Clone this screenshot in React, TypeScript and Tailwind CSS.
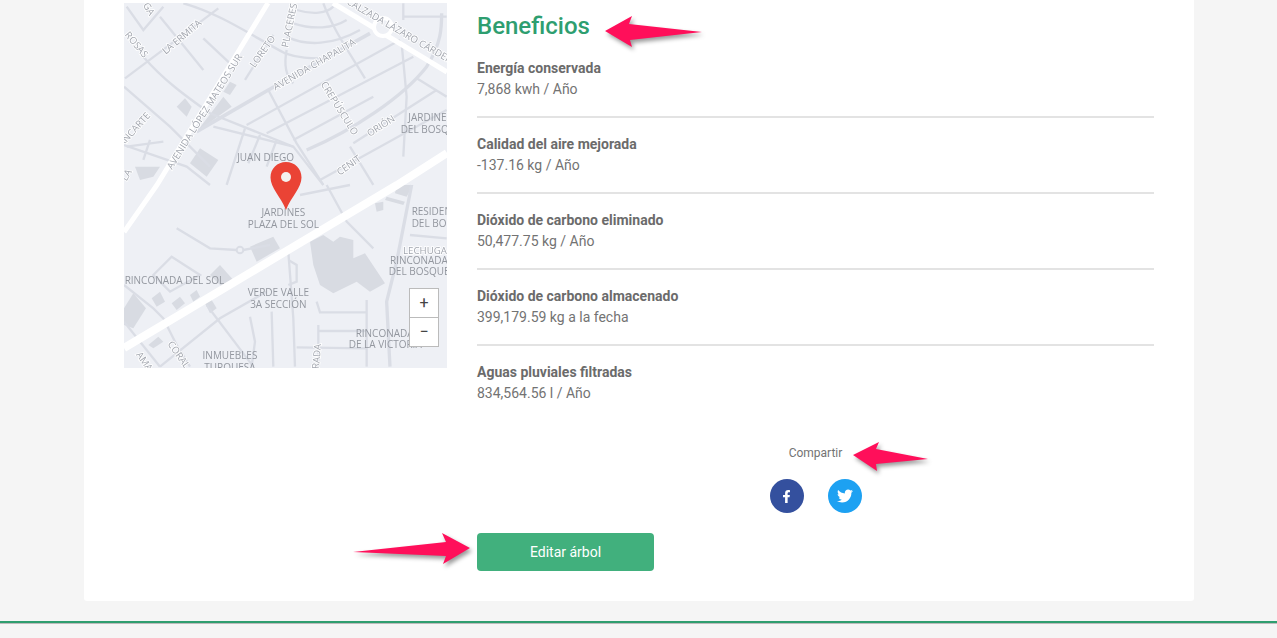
import { FaFacebookF, FaTwitter } from "react-icons/fa";

const benefits = [
  { label: "Energía conservada", value: "7,868 kwh / Año" },
  { label: "Calidad del aire mejorada", value: "-137.16 kg / Año" },
  { label: "Dióxido de carbono eliminado", value: "50,477.75 kg / Año" },
  { label: "Dióxido de carbono almacenado", value: "399,179.59 kg a la fecha" },
  { label: "Aguas pluviales filtradas", value: "834,564.56 l / Año" },
];

// map data is in 3x units, scaled down by the <g> transforms below
const topRoads = [
  "M20 20L70 90L130 20",
  "M15 235L295 25",
  "M120 50L250 210",
  "M190 10C300 40 400 110 495 160C540 175 570 175 600 175",
  "M250 115L330 190",
  "M70 170C130 240 200 290 270 340L520 440L610 555",
  "M12 260L150 380L270 500",
  "M445 270L530 430L610 555",
  "M375 240L460 105",
  "M500 150C490 200 500 230 520 250",
  "M610 10C640 90 690 160 735 235",
  "M380 375L840 120",
  "M440 400L880 170",
  "M520 420L760 290",
  "M700 430L950 270",
  "M845 130L860 290L850 470",
  "M890 235L980 290",
  "M600 540L980 330",
  "M320 555L375 385",
  "M385 490L420 405",
  "M440 500L470 420",
  "M20 440L130 425",
  "M90 420L70 480",
  "M12 435L200 500L270 555",
  "M850 50L980 50",
  "M850 10L850 60",
  "M530 30C580 45 620 40 640 20",
  "M520 70C580 90 640 85 680 60",
  "M500 110C560 140 640 135 720 90",
  "M690 440L760 555",
  "M280 380L520 440",
];
const topBuildings = [
  "170,320 195,295 215,320 200,350",
  "310,275 330,245 350,255 330,285",
  "280,330 310,290 335,320 230,395",
  "210,490 240,445 295,480 260,530",
  "45,500 120,500 100,530 60,540",
];
const bottomRoads = [
  "M170 130L270 190L350 195",
  "M370 195L450 180",
  "M100 270L155 215L240 270L150 320Z",
  "M12 300L100 370L130 400L170 480L210 545",
  "M620 0L680 110L760 190",
  "M540 30L690 0",
  "M870 150L980 160",
  "M505 200L520 400L525 545",
  "M505 225L530 240L530 290L505 300",
  "M590 350L600 382L740 382",
  "M740 345L740 545",
  "M595 420L595 545",
  "M595 438L740 438",
  "M530 487L740 490",
  "M120 545L300 400L440 320",
  "M260 360L400 545",
  "M390 395L405 470L395 545",
  "M455 380L460 545",
  "M12 410L120 545",
];
const bottomBuildings = [
  "570,170 610,150 640,170 660,155 700,165 700,220 735,205 795,295 750,320 710,290 640,325 600,300 580,240",
  "390,185 460,155 480,190 410,230",
  "800,35 855,50 850,60 795,45",
  "830,0 880,0 860,35 825,25",
  "765,55 790,50 790,75 770,80",
  "155,355 180,335 195,355 170,375",
  "210,330 230,315 240,335 220,350",
  "255,355 275,345 290,370 270,385",
  "12,370 40,325 78,370 40,430 12,420",
  "95,340 120,320 135,350 110,365",
  "270,270 300,240 340,285 310,310",
  "85,480 115,455 130,470 100,490",
];

const topLabels = [
  { t: "LA ERMITA", x: 192, y: 118, r: -40 },
  { t: "ROSAS", x: 42, y: 140, r: 50 },
  { t: "GA", x: 78, y: 32, r: 60 },
  { t: "AVENIDA LÓPEZ MATEOS SUR", x: 262, y: 340, r: -58 },
  { t: "LORETO", x: 436, y: 160, r: -55 },
  { t: "PLACERES", x: 518, y: 78, r: -78 },
  { t: "AVENIDA CHAPALITA", x: 588, y: 202, r: -30 },
  { t: "CALZADA LÁZARO CÁRDENAS", x: 850, y: 110, r: 30 },
  { t: "CREPÚSCULO", x: 650, y: 330, r: 58 },
  { t: "ORIÓN", x: 788, y: 386, r: -33 },
  { t: "CENIT", x: 692, y: 504, r: -35 },
  { t: "ANCARTE", x: 50, y: 395, r: -48 },
  { t: "LA", x: 28, y: 530, r: -60 },
];
const bottomLabels = [
  { t: "AMA", x: 65, y: 535, r: 55 },
  { t: "CORAL", x: 168, y: 515, r: 55 },
  { t: "RADA", x: 600, y: 515, r: -85 },
  { t: "LECHUGA", x: 915, y: 206, r: 0 },
];

function MapText({ t, x, y, r }: { t: string; x: number; y: number; r: number }) {
  return (
    <text
      x={x}
      y={y}
      transform={`rotate(${r} ${x} ${y})`}
      textAnchor="middle"
      fontSize="29"
      className="fill-[#a2a6af] stroke-white stroke-[5px] [paint-order:stroke]"
    >
      {t}
    </text>
  );
}

function PlaceText({ t, x, y, anchor = "middle" }: { t: string; x: number; y: number; anchor?: "middle" | "start" }) {
  return (
    <text x={x} y={y} textAnchor={anchor} fontSize="30" className="fill-[#93979f]">
      {t}
    </text>
  );
}

function TreeMap() {
  return (
    <div className="relative w-[323px] h-[365px] shrink-0 overflow-hidden bg-[#eef0f5]">
      <svg width="323" height="365" viewBox="0 0 323 365" className="block font-['Open_Sans',sans-serif] blur-[0.3px]">
        <g transform="translate(-4 -3) scale(0.3333)">
          {topBuildings.map((p) => (
            <polygon key={p} points={p} fill="#d8dbe2" />
          ))}
          {topRoads.map((d) => (
            <path key={d} d={d} fill="none" stroke="#dadde5" strokeWidth="7" />
          ))}
          <path d="M230 395L445 270L750 100" fill="none" stroke="#dadde5" strokeWidth="11" />
          <path d="M560 450C700 390 850 290 920 200C965 130 965 80 965 40" fill="none" stroke="#dadde5" strokeWidth="10" />
        </g>
        <g transform="translate(-4 182) scale(0.3333)">
          {bottomBuildings.map((p) => (
            <polygon key={p} points={p} fill="#d8dbe2" />
          ))}
          {bottomRoads.map((d) => (
            <path key={d} d={d} fill="none" stroke="#dadde5" strokeWidth="7" />
          ))}
          <path d="M875 0L830 230L800 350L810 545" fill="none" stroke="#dadde5" strokeWidth="10" />
          <circle cx="360" cy="195" r="10" fill="#eef0f5" stroke="#dadde5" strokeWidth="6" />
        </g>
        {/* main avenues */}
        <path d="M144 0L33 182L0 229" fill="none" stroke="#fff" strokeWidth="5" />
        <path d="M209 0L323 69" fill="none" stroke="#fff" strokeWidth="5" />
        <circle cx="259" cy="24" r="9" fill="#eef0f5" stroke="#fff" strokeWidth="4" />
        <path d="M0 345L273 182L323 150" fill="none" stroke="#fff" strokeWidth="8" />
        <g transform="translate(-4 -3) scale(0.3333)">
          {topLabels.map((l) => (
            <MapText key={l.t} {...l} />
          ))}
          <PlaceText t="JUAN DIEGO" x={437} y={482} />
          <PlaceText t="JARDINES" x={865} y={362} anchor="start" />
          <PlaceText t="DEL BOSQUE" x={842} y={398} anchor="start" />
        </g>
        <g transform="translate(-4 182) scale(0.3333)">
          {bottomLabels.map((l) => (
            <MapText key={l.t} {...l} />
          ))}
          <PlaceText t="JARDINES" x={490} y={92} />
          <PlaceText t="PLAZA DEL SOL" x={490} y={128} />
          <PlaceText t="RESIDENCIAL" x={875} y={90} anchor="start" />
          <PlaceText t="DEL BOSQUE" x={875} y={126} anchor="start" />
          <PlaceText t="RINCONADA" x={810} y={236} anchor="start" />
          <PlaceText t="DEL BOSQUE" x={806} y={270} anchor="start" />
          <PlaceText t="RINCONADA DEL SOL" x={14} y={296} anchor="start" />
          <PlaceText t="VERDE VALLE" x={475} y={332} />
          <PlaceText t="3A SECCIÓN" x={475} y={368} />
          <PlaceText t="RINCONADA" x={707} y={455} anchor="start" />
          <PlaceText t="DE LA VICTORIA" x={686} y={490} anchor="start" />
          <PlaceText t="INMUEBLES" x={330} y={523} />
          <PlaceText t="TURQUESA" x={330} y={557} />
        </g>
      </svg>
      {/* marker */}
      <svg width="32" height="50" viewBox="0 0 32 50" className="absolute left-[146px] top-[158px]">
        <path d="M16 1C7.2 1 .5 7.8.5 16.4C.5 27 10.5 35 16 49C21.5 35 31.500 27 31.500 16.400C31.500 7.800 24.800 1 16 1Z" fill="#ea4335" />
        <circle cx="16" cy="16" r="5" fill="#f4f1ef" />
      </svg>
      {/* zoom control */}
      <div className="absolute left-[285px] top-[285px] w-[30px] flex flex-col bg-white border border-[#bbb] font-['Roboto',sans-serif] text-[#444]">
        <div className="h-[29px] flex items-center justify-center text-base leading-none border-b border-[#bbb]">+</div>
        <div className="h-[28px] flex items-center justify-center text-base leading-none">−</div>
      </div>
    </div>
  );
}

export default function App() {
  return (
    <div className="relative h-[638px] overflow-hidden bg-[#f5f5f5] font-['Roboto',sans-serif]">
      <div className="mx-[84px] h-[601px] w-[1110px] bg-white rounded-b-[3px] flex pl-[40px] pt-[3px]">
        <TreeMap />
        <div className="ml-[30px] w-[677px]">
          <h2 className="pt-[7px] text-2xl leading-8 font-medium text-[#2e9e70]">Beneficios</h2>
          {benefits.map((b, i) => (
            <div
              key={b.label}
              className={`pt-4 text-sm leading-[21px] text-[#737373] ${i < benefits.length - 1 ? "h-[76px] border-b-2 border-[#e3e3e3]" : ""}`}
            >
              <div className="font-bold text-[#6b6b6b]">{b.label}</div>
              <div>{b.value}</div>
            </div>
          ))}
          <div className="mt-10 text-center text-xs leading-[18px] text-[#737373]">Compartir</div>
          <div className="mt-[17px] flex justify-center gap-6">
            <a className="w-[34px] h-[34px] rounded-full bg-[#34509e] flex items-center justify-center text-white">
              <FaFacebookF size={13} />
            </a>
            <a className="w-[34px] h-[34px] rounded-full bg-[#1da1f2] flex items-center justify-center text-white">
              <FaTwitter size={16} />
            </a>
          </div>
          <button
            type="button"
            className="mt-5 w-[177px] h-[38px] rounded bg-[#41b07d] text-sm text-white flex items-center justify-center"
          >
            Editar árbol
          </button>
        </div>
      </div>
      <div className="mt-5 h-[3px] bg-[#2f9e6f] border-b border-[#bcbcbc]" />
      {/* annotation arrows */}
      <svg width="1277" height="638" className="absolute inset-0 pointer-events-none drop-shadow-[2px_3px_2px_rgba(0,0,0,0.4)]">
        <polygon points="605,31 632,16 629,24 702,32 630,40 632,47" fill="#ff0f5a" />
        <polygon points="853,455 879,442 876,449 928,459 876,464 877,471" fill="#ff0f5a" />
        <polygon points="470,548 442,533 446,542 353,552 446,556 443,564" fill="#ff0f5a" />
      </svg>
    </div>
  );
}
